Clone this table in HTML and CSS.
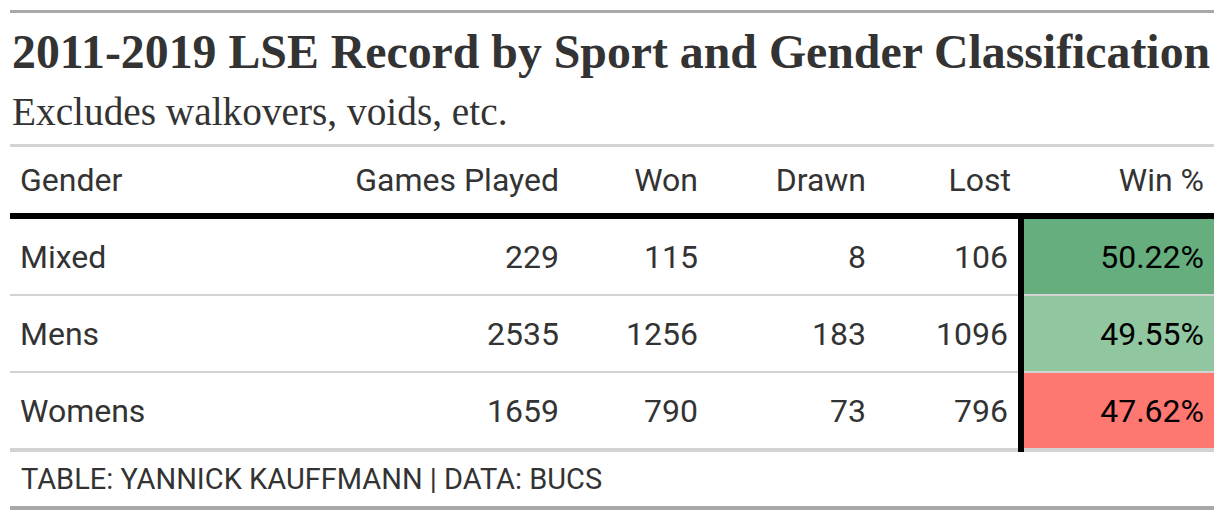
FILE: index.html
```html
<!DOCTYPE html>
<html>
<head>
<meta charset="utf-8">
<link rel="stylesheet" href="styles.css">
</head>
<body>
<div class="wrap">
  <div class="heading">
    <div class="title">2011-2019 LSE Record by Sport and Gender Classification</div>
    <div class="subtitle">Excludes walkovers, voids, etc.</div>
  </div>
  <table class="gt">
    <colgroup>
      <col class="c-gender"><col class="c-played"><col class="c-won"><col class="c-drawn"><col class="c-lost"><col class="c-pct">
    </colgroup>
    <thead>
      <tr>
        <th class="left">Gender</th>
        <th>Games Played</th>
        <th>Won</th>
        <th>Drawn</th>
        <th>Lost</th>
        <th class="pct-h">Win %</th>
      </tr>
    </thead>
    <tbody>
      <tr>
        <td class="left">Mixed</td><td>229</td><td>115</td><td>8</td><td class="lost">106</td><td class="pct g1">50.22%</td>
      </tr>
      <tr>
        <td class="left">Mens</td><td>2535</td><td>1256</td><td>183</td><td class="lost">1096</td><td class="pct g2">49.55%</td>
      </tr>
      <tr>
        <td class="left">Womens</td><td>1659</td><td>790</td><td>73</td><td class="lost">796</td><td class="pct r1">47.62%</td>
      </tr>
    </tbody>
  </table>
  <div class="footer">TABLE: YANNICK KAUFFMANN | DATA: BUCS</div>
</div>
</body>
</html>
```

FILE: styles.css
```css
html, body {
  margin: 0;
  padding: 0;
  background: #ffffff;
}

.wrap {
  margin: 10px 10px 0 10px;
  width: 1204px;
  border-top: 3px solid #A8A8A8;
  border-bottom: 4px solid #A8A8A8;
  font-family: Roboto, "Liberation Sans", sans-serif;
  color: #333333;
}

.heading {
  border-bottom: 3px solid #D3D3D3;
  padding: 0 0 0 2px;
  height: 134px;
  box-sizing: border-box;
}

.title {
  font-family: "Liberation Serif", "Times New Roman", serif;
  font-weight: bold;
  font-size: 47.8px;
  line-height: 54px;
  padding-top: 12px;
  color: #333333;
  white-space: nowrap;
}

.subtitle {
  font-family: "Liberation Serif", "Times New Roman", serif;
  font-size: 39.3px;
  line-height: 46px;
  padding-top: 10px;
  color: #333333;
}

.gt {
  border-collapse: collapse;
  width: 1204px;
  table-layout: fixed;
  font-size: 32px;
}

.c-gender { width: 290px; }
.c-played { width: 269px; }
.c-won { width: 139px; }
.c-drawn { width: 168px; }
.c-lost { width: 145px; }
.c-pct { width: 193px; }

.gt th {
  font-weight: normal;
  text-align: right;
  height: 69px;
  padding: 0 10px;
  line-height: 36px;
  color: #333333;
  border-bottom: 6px solid #000000;
  box-sizing: border-box;
}

.gt td {
  text-align: right;
  padding: 0 10px;
  height: 75px;
  line-height: 36px;
  color: #333333;
  border-bottom: 2px solid #D3D3D3;
}

.gt tbody tr:last-child td {
  border-bottom: 4px solid #D3D3D3;
}

.gt .left {
  text-align: left;
}

.gt td.lost {
  border-right: 6px solid #000000;
}

.gt td.pct {
  color: #000000;
}

.g1 { background: #67AE7F; }
.g2 { background: #90C7A0; }
.r1 { background: #FF7771; }

.footer {
  height: 54px;
  line-height: 54px;
  padding-left: 11px;
  font-size: 29px;
  color: #333333;
}
```
